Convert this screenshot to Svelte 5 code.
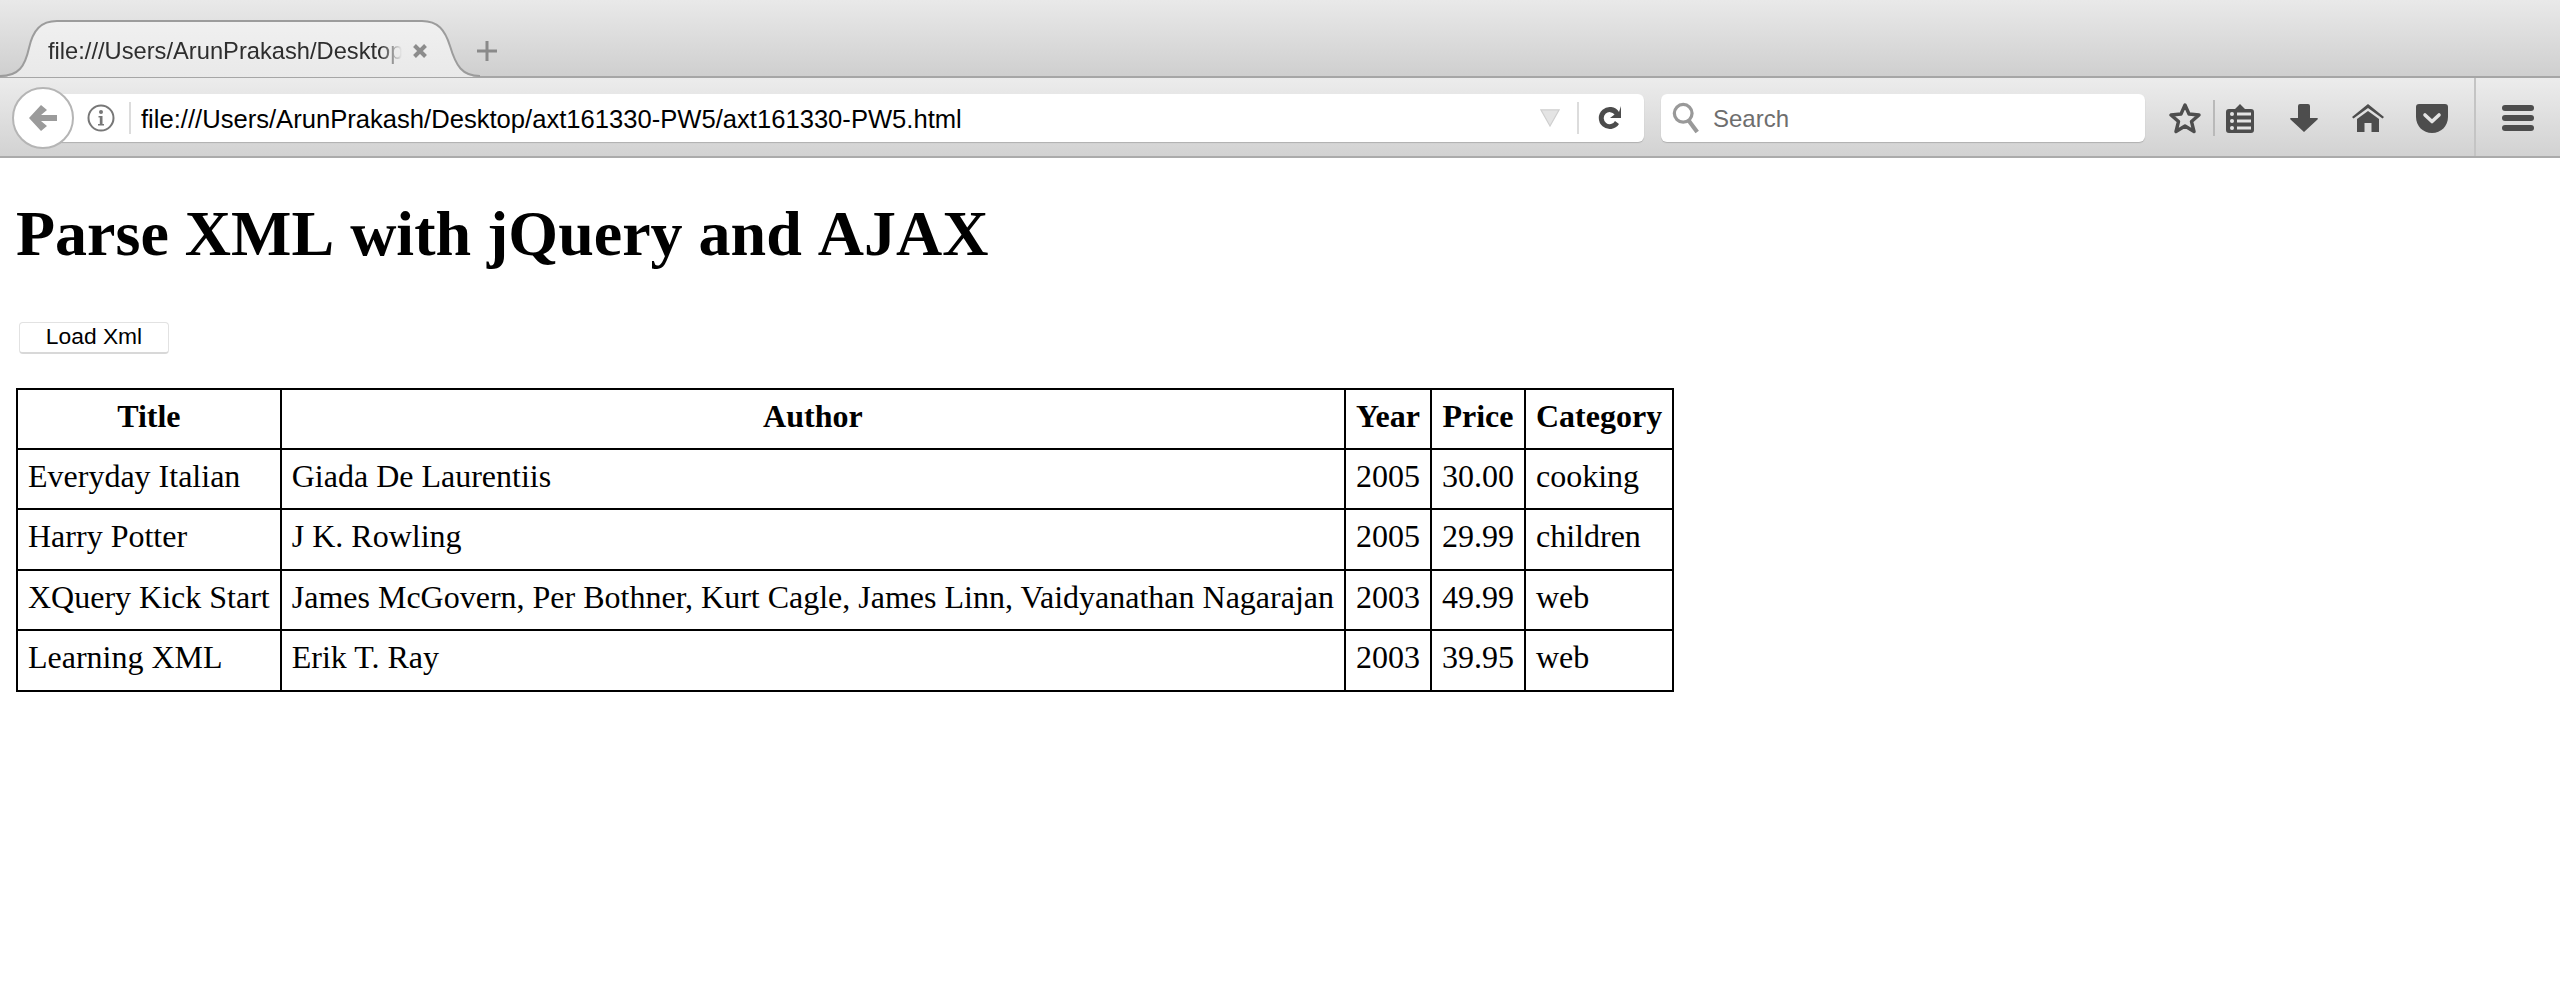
<script>
	const columns = ['Title', 'Author', 'Year', 'Price', 'Category'];
	const books = [
		['Everyday Italian', 'Giada De Laurentiis', '2005', '30.00', 'cooking'],
		['Harry Potter', 'J K. Rowling', '2005', '29.99', 'children'],
		['XQuery Kick Start', 'James McGovern, Per Bothner, Kurt Cagle, James Linn, Vaidyanathan Nagarajan', '2003', '49.99', 'web'],
		['Learning XML', 'Erik T. Ray', '2003', '39.95', 'web']
	];
</script>

<div class="browser">
	<div class="tabstrip">
		<div class="tab">
			<svg class="tab-shape" width="480" height="78" viewBox="0 0 480 78">
				<defs>
					<linearGradient id="tabfill" x1="0" y1="0" x2="0" y2="1">
						<stop offset="0" stop-color="#f0f0f0" />
						<stop offset="1" stop-color="#e9e9e9" />
					</linearGradient>
				</defs>
				<path d="M0 77C19 77 25 66 29 48C33 30 41 22 57 22L422 22C438 22 445 30 450 46C456 66 462 77 480 77Z" fill="url(#tabfill)" />
				<path d="M0 76C19 76 25 66 29 48C33 30 41 21 57 21L422 21C438 21 445 30 450 46C456 66 462 76 480 76" fill="none" stroke="#9c9c9c" stroke-width="2" />
			</svg>
			<span class="tab-title">file:///Users/ArunPrakash/Desktop</span>
			<svg class="tab-close" width="16" height="16" viewBox="0 0 16 16">
				<path d="M2.5 2.5L13.5 13.5M13.5 2.5L2.5 13.5" stroke="#8c8c8c" stroke-width="4" />
			</svg>
		</div>
		<svg class="new-tab" width="22" height="22" viewBox="0 0 22 22">
			<path d="M11 1V21M1 11H21" stroke="#8a8a8a" stroke-width="3" />
		</svg>
	</div>

	<div class="toolbar">
		<div class="back">
			<svg width="32" height="32" viewBox="0 0 32 32">
				<path d="M14 3L2 16L14 29L20 24L14 19H30V13H14L20 8Z" fill="#9b9b9b" />
			</svg>
		</div>
		<div class="urlbar">
			<svg class="info" width="28" height="28" viewBox="0 0 28 28">
				<circle cx="14" cy="14" r="12.5" fill="none" stroke="#777" stroke-width="2" />
				<circle cx="14" cy="8" r="2" fill="#777" />
				<path d="M11.5 12H15.5V20H17V21.5H11V20H12.8V13.5H11.5Z" fill="#777" />
			</svg>
			<span class="divider"></span>
			<span class="url">file:///Users/ArunPrakash/Desktop/axt161330-PW5/axt161330-PW5.html</span>
			<svg class="dropmarker" width="20" height="18" viewBox="0 0 20 18">
				<path d="M0.8 0.8H19.2L10 17Z" fill="#e4e4e4" stroke="#cfcfcf" stroke-width="1.2" />
			</svg>
			<span class="divider go"></span>
			<svg class="reload" width="24" height="26" viewBox="0 0 24 26">
				<path d="M22 7A11 11 0 1 0 22 19L18 16A6 6 0 1 1 17.6 9.6L13 13H24V1Z" fill="#4c4c4c" />
			</svg>
		</div>
		<div class="searchbar">
			<svg width="28" height="32" viewBox="0 0 30 34">
				<circle cx="12" cy="12" r="9.5" fill="none" stroke="#999" stroke-width="3.5" />
				<path d="M18 20L27 32" stroke="#999" stroke-width="4.5" />
			</svg>
			<span class="search-text">Search</span>
		</div>

		<svg class="star" width="32" height="32" viewBox="0 0 32 32">
			<path d="M16 3L20 12L30 13L22.500 19.500L25 29.500L16 24L7 29.500L9.500 19.500L2 13L12 12Z" fill="none" stroke="#4d4d4d" stroke-width="3.4" stroke-linejoin="round" />
		</svg>
		<span class="tool-sep"></span>
		<svg class="reading" width="28" height="30" viewBox="0 0 28 30">
			<path d="M3 6H9L14 1L19 6H25Q28 6 28 9V27Q28 30 25 30H3Q0 30 0 27V9Q0 6 3 6Z" fill="#4d4d4d" />
			<circle cx="6" cy="11" r="2" fill="#e4e4e4" />
			<circle cx="6" cy="18" r="2" fill="#e4e4e4" />
			<circle cx="6" cy="25" r="2" fill="#e4e4e4" />
			<path d="M11 9.500H25V12.500H11ZM11 16.500H25V19.500H11ZM11 23.500H25V26.500H11Z" fill="#e4e4e4" />
		</svg>
		<svg class="download" width="28" height="28" viewBox="0 0 28 28">
			<path d="M8 2Q8 0 10 0H18Q20 0 20 2V14H27Q28.500 14 27.500 15.500L14 28L0.500 15.500Q-0.500 14 1 14H8Z" fill="#4d4d4d" />
		</svg>
		<svg class="home" width="32" height="28" viewBox="0 0 32 28">
			<path d="M16 0L32 13L30.500 14.500L16 4L1.500 14.500L0 13Z" fill="#4d4d4d" />
			<path d="M16 7L27 15V28H19.500V19H12.500V28H5V15Z" fill="#4d4d4d" />
		</svg>
		<svg class="pocket" width="32" height="29" viewBox="0 0 32 29">
			<path d="M3 0H29Q32 0 32 3V13C32 22 25 29 16 29C7 29 0 22 0 13V3Q0 0 3 0Z" fill="#4d4d4d" />
			<path d="M9 11L16 17.500L23 11" fill="none" stroke="#e4e4e4" stroke-width="3.6" stroke-linecap="round" stroke-linejoin="round" />
		</svg>
		<span class="menu-sep"></span>
		<div class="menu">
			<span></span>
			<span></span>
			<span></span>
		</div>
	</div>
</div>

<main class="page">
	<h1>Parse XML with jQuery and AJAX</h1>
	<button type="button">Load Xml</button>
	<table>
		<thead>
			<tr>
				{#each columns as column}
					<th>{column}</th>
				{/each}
			</tr>
		</thead>
		<tbody>
			{#each books as book}
				<tr>
					{#each book as cell}
						<td>{cell}</td>
					{/each}
				</tr>
			{/each}
		</tbody>
	</table>
</main>

<style>
	:global(body) {
		background: white;
	}

	.browser {
		font-family: 'Liberation Sans', Arial, sans-serif;
	}

	.tabstrip {
		display: flex;
		align-items: center;
		height: 78px;
		box-sizing: border-box;
		background: linear-gradient(#e9e9e9, #cfcfcf);
		border-bottom: 2px solid #a6a6a6;
	}

	.tab {
		position: relative;
		width: 476px;
		height: 78px;
		flex: none;
		display: flex;
		align-items: center;
		padding: 24px 0 0 48px;
		box-sizing: border-box;
		align-self: flex-start;
	}

	.tab-shape {
		position: absolute;
		left: 0;
		top: 0;
	}

	.tab-title {
		position: relative;
		width: 354px;
		white-space: nowrap;
		font-size: 23.7px;
		color: #2e2e2e;
		mask-image: linear-gradient(to right, black 94%, transparent);
	}

	.tab-close {
		position: relative;
		margin-left: 10px;
	}

	.new-tab {
		margin: 26px 0 0 0;
	}

	.toolbar {
		display: flex;
		align-items: center;
		height: 80px;
		box-sizing: border-box;
		padding: 2px 0 0 12px;
		background: linear-gradient(#ececec, #d2d2d2);
		border-bottom: 2px solid #ababab;
	}

	.back {
		position: relative;
		z-index: 1;
		width: 62px;
		height: 62px;
		flex: none;
		box-sizing: border-box;
		border-radius: 50%;
		background: white;
		border: 2px solid #b5b5b5;
		display: flex;
		align-items: center;
		justify-content: center;
		margin-right: -34px;
	}

	.urlbar {
		width: 1604px;
		height: 48px;
		flex: none;
		box-sizing: border-box;
		display: flex;
		align-items: center;
		background: white;
		border-radius: 0 6px 6px 0;
		box-shadow: 0 1px 1px #b0b0b0;
		padding-left: 47px;
	}

	.info {
		flex: none;
	}

	.divider {
		width: 2px;
		height: 32px;
		flex: none;
		background: #dcdcdc;
		margin-left: 14px;
	}

	.url {
		width: 1399px;
		flex: none;
		margin-left: 10px;
		padding-top: 2px;
		font-size: 25.6px;
		color: black;
		white-space: nowrap;
	}

	.dropmarker {
		flex: none;
	}

	.divider.go {
		margin-left: 17px;
	}

	.reload {
		flex: none;
		margin-left: 18px;
	}

	.searchbar {
		width: 484px;
		height: 48px;
		flex: none;
		box-sizing: border-box;
		margin-left: 17px;
		padding-left: 11px;
		display: flex;
		align-items: center;
		gap: 13px;
		background: white;
		border-radius: 6px;
		box-shadow: 0 1px 1px #b0b0b0;
		font-size: 24px;
		color: #6e6e6e;
	}

	.search-text {
		padding-top: 2px;
	}

	.star {
		margin-left: 24px;
		flex: none;
	}

	.tool-sep {
		width: 2px;
		height: 36px;
		flex: none;
		background: #b9b9b9;
		margin-left: 12px;
	}

	.reading {
		margin-left: 11px;
		flex: none;
	}

	.download {
		margin-left: 36px;
		flex: none;
	}

	.home {
		margin-left: 34px;
		flex: none;
	}

	.pocket {
		margin-left: 32px;
		flex: none;
	}

	.menu-sep {
		align-self: stretch;
		width: 2px;
		flex: none;
		background: #c4c4c4;
		margin: -2px 0 0 26px;
	}

	.menu {
		margin-left: 26px;
		width: 32px;
		flex: none;
		display: flex;
		flex-direction: column;
		gap: 4px;
	}

	.menu span {
		height: 6px;
		border-radius: 3px;
		background: #4d4d4d;
	}

	.page {
		padding: 39px 16px 0;
		font-family: 'Liberation Serif', 'Times New Roman', serif;
		color: black;
	}

	h1 {
		margin: 0 0 51px;
		font-size: 64px;
		font-weight: bold;
		line-height: 74px;
		font-kerning: none;
	}

	button {
		display: block;
		width: 150px;
		height: 32px;
		margin: 0 0 34px 3px;
		padding: 0 0 2px;
		box-sizing: border-box;
		background: white;
		border: 1px solid #e2e2e2;
		border-bottom: 2px solid #d8d8d8;
		border-radius: 4px;
		font-family: 'Liberation Sans', Arial, sans-serif;
		font-size: 22.8px;
		color: black;
	}

	table {
		border-collapse: collapse;
		font-size: 32px;
	}

	th,
	td {
		border: 2px solid black;
		padding: 7px 10px 13px;
		line-height: 38px;
		white-space: nowrap;
	}

	tbody tr:nth-child(even) td {
		padding-bottom: 14px;
	}

	td {
		text-align: left;
	}
</style>
